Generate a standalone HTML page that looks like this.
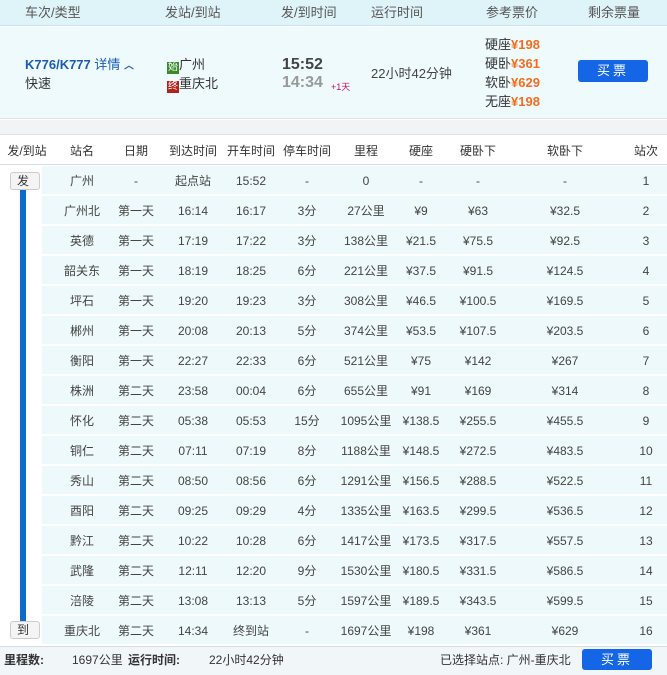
<!DOCTYPE html>
<html><head><meta charset="utf-8"><style>
*{margin:0;padding:0;box-sizing:border-box}
body{width:667px;height:675px;overflow:hidden;background:#fff;font-family:"Liberation Sans","Noto Sans CJK SC",sans-serif;font-size:12px;line-height:14px;color:#333;position:relative}
.a{position:absolute;white-space:nowrap;line-height:14px}
.c{position:absolute;transform:translateX(-50%);white-space:nowrap;line-height:14px}
#top{position:absolute;left:0;top:0;width:667px;height:26px;background:#dff4f8;border-bottom:1px solid #c9e6ee}
#info{position:absolute;left:0;top:27px;width:667px;height:92px;background:#effafd;border-bottom:1px solid #dde3e6}
#gray{position:absolute;left:0;top:120px;width:667px;height:15px;background:#f1f3f4;border-bottom:1px solid #dfe3e6}
#th{position:absolute;left:0;top:136px;width:667px;height:29px;background:#fff;border-bottom:1px solid #d4dde0}
.row{position:absolute;left:42px;width:625px;height:29px;background:#eef9fb;border-bottom:1px solid #fff}
.btn{position:absolute;background:#1466e6;color:#fff;border-radius:3px;text-align:center;font-size:13px;letter-spacing:3px}
.o{color:#f26d1e;font-weight:bold;font-size:13px}
.tag{position:absolute;left:10px;width:30px;height:18px;background:#f4f4f4;border:1px solid #ccc;border-radius:3px;font-size:12px;text-align:center;line-height:16px;padding-right:4px}
</style></head><body>
<div id="top"></div>
<div class="a" style="left:25px;top:6px;color:#555;font-size:13px">车次/类型</div>
<div class="a" style="left:165px;top:6px;color:#555;font-size:13px">发站/到站</div>
<div class="a" style="left:281px;top:6px;color:#555;font-size:13px">发/到时间</div>
<div class="a" style="left:371px;top:6px;color:#555;font-size:13px">运行时间</div>
<div class="a" style="left:486px;top:6px;color:#555;font-size:13px">参考票价</div>
<div class="a" style="left:588px;top:6px;color:#555;font-size:13px">剩余票量</div>
<div id="info"></div>
<div class="a" style="left:25px;top:58px;color:#1a5cb5;font-weight:bold;font-size:13px">K776/K777 <span style="font-weight:normal">详情</span> <span style="font-size:10px">︿</span></div>
<div class="a" style="left:25px;top:77px;font-size:13px">快速</div>
<div class="a" style="left:167px;top:58px;font-size:13px"><span style="display:inline-block;width:12px;height:12px;background:#3a8a2a;color:#fff;font-size:10px;line-height:12px;text-align:center;vertical-align:-1px">始</span>广州</div>
<div class="a" style="left:167px;top:77px;font-size:13px"><span style="display:inline-block;width:12px;height:12px;background:#b2241a;color:#fff;font-size:10px;line-height:12px;text-align:center;vertical-align:-1px">终</span>重庆北</div>
<div class="a" style="left:282px;top:56px;font-size:16px;line-height:18px;font-weight:bold;color:#444">15:52</div>
<div class="a" style="left:282px;top:74px;font-size:16px;line-height:18px;font-weight:bold;color:#999">14:34</div>
<div class="a" style="left:331px;top:80px;font-size:9px;color:#c0106a">+1天</div>
<div class="a" style="left:371px;top:67px;color:#444;font-size:13px">22小时42分钟</div>
<div class="a" style="left:485px;top:38px;font-size:13px">硬座<span class="o">¥198</span></div>
<div class="a" style="left:485px;top:57px;font-size:13px">硬卧<span class="o">¥361</span></div>
<div class="a" style="left:485px;top:76px;font-size:13px">软卧<span class="o">¥629</span></div>
<div class="a" style="left:485px;top:95px;font-size:13px">无座<span class="o">¥198</span></div>
<div class="btn" style="left:578px;top:60px;width:70px;height:22px;line-height:22px">买票</div>
<div id="gray"></div>
<div id="th"></div>
<div id="ths"></div>
<div style="position:absolute;left:20px;top:185px;width:6px;height:438px;background:#0f6cc6"></div>
<div id="rows"></div>
<div style="position:absolute;left:0;top:646px;width:667px;height:29px;background:#f1f6f8;border-top:1px solid #d4dde0"></div>
<div class="a" style="left:4px;top:653px;font-weight:bold">里程数:</div>
<div class="a" style="left:72px;top:653px">1697公里</div>
<div class="a" style="left:128px;top:653px;font-weight:bold">运行时间:</div>
<div class="a" style="left:209px;top:653px">22小时42分钟</div>
<div class="a" style="left:440px;top:653px">已选择站点: 广州-重庆北</div>
<div class="btn" style="left:582px;top:649px;width:70px;height:21px;line-height:21px">买票</div>
<script>
var xs=[27,82,136,193,251,307,366,421,478,565,646];
var hd=["发/到站","站名","日期","到达时间","开车时间","停车时间","里程","硬座","硬卧下","软卧下","站次"];
var h="";
hd.forEach(function(t,i){h+='<div class="c" style="left:'+xs[i]+'px;top:144px;color:#333">'+t+'</div>'});
document.getElementById("ths").innerHTML=h;
var d=[["广州","-","起点站","15:52","-","0","-","-","-"],
["广州北","第一天","16:14","16:17","3分","27公里","¥9","¥63","¥32.5"],
["英德","第一天","17:19","17:22","3分","138公里","¥21.5","¥75.5","¥92.5"],
["韶关东","第一天","18:19","18:25","6分","221公里","¥37.5","¥91.5","¥124.5"],
["坪石","第一天","19:20","19:23","3分","308公里","¥46.5","¥100.5","¥169.5"],
["郴州","第一天","20:08","20:13","5分","374公里","¥53.5","¥107.5","¥203.5"],
["衡阳","第一天","22:27","22:33","6分","521公里","¥75","¥142","¥267"],
["株洲","第二天","23:58","00:04","6分","655公里","¥91","¥169","¥314"],
["怀化","第二天","05:38","05:53","15分","1095公里","¥138.5","¥255.5","¥455.5"],
["铜仁","第二天","07:11","07:19","8分","1188公里","¥148.5","¥272.5","¥483.5"],
["秀山","第二天","08:50","08:56","6分","1291公里","¥156.5","¥288.5","¥522.5"],
["酉阳","第二天","09:25","09:29","4分","1335公里","¥163.5","¥299.5","¥536.5"],
["黔江","第二天","10:22","10:28","6分","1417公里","¥173.5","¥317.5","¥557.5"],
["武隆","第二天","12:11","12:20","9分","1530公里","¥180.5","¥331.5","¥586.5"],
["涪陵","第二天","13:08","13:13","5分","1597公里","¥189.5","¥343.5","¥599.5"],
["重庆北","第二天","14:34","终到站","-","1697公里","¥198","¥361","¥629"]];
h="";
d.forEach(function(r,k){var y=166+k*30;
h+='<div class="row" style="top:'+y+'px"></div>';
r.forEach(function(t,i){h+='<div class="c" style="left:'+xs[i+1]+'px;top:'+(y+8)+'px;color:#444">'+t+'</div>'});
h+='<div class="c" style="left:646px;top:'+(y+8)+'px;color:#444">'+(k+1)+'</div>';});
h+='<div class="tag" style="top:172px">发</div><div class="tag" style="top:621px">到</div>';
document.getElementById("rows").innerHTML=h;
</script>
</body></html>
